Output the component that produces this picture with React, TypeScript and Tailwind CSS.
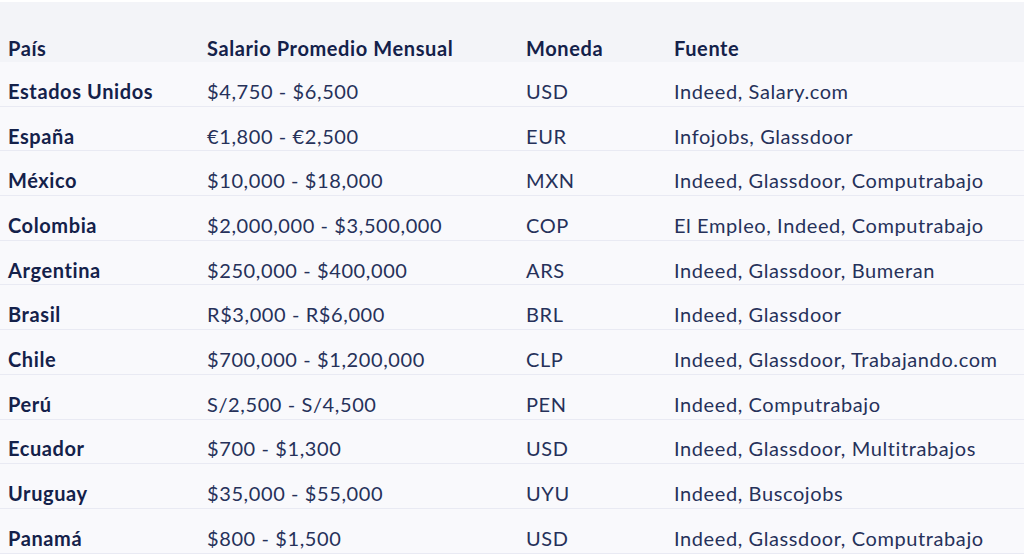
const rows = [
  ["Estados Unidos", "$4,750 - $6,500", "USD", "Indeed, Salary.com"],
  ["España", "€1,800 - €2,500", "EUR", "Infojobs, Glassdoor"],
  ["México", "$10,000 - $18,000", "MXN", "Indeed, Glassdoor, Computrabajo"],
  ["Colombia", "$2,000,000 - $3,500,000", "COP", "El Empleo, Indeed, Computrabajo"],
  ["Argentina", "$250,000 - $400,000", "ARS", "Indeed, Glassdoor, Bumeran"],
  ["Brasil", "R$3,000 - R$6,000", "BRL", "Indeed, Glassdoor"],
  ["Chile", "$700,000 - $1,200,000", "CLP", "Indeed, Glassdoor, Trabajando.com"],
  ["Perú", "S/2,500 - S/4,500", "PEN", "Indeed, Computrabajo"],
  ["Ecuador", "$700 - $1,300", "USD", "Indeed, Glassdoor, Multitrabajos"],
  ["Uruguay", "$35,000 - $55,000", "UYU", "Indeed, Buscojobs"],
  ["Panamá", "$800 - $1,500", "USD", "Indeed, Glassdoor, Computrabajo"],
];

export default function App() {
  return (
    <div className="w-[1024px] h-[556px] overflow-hidden bg-white pt-[2px] font-['Lato',sans-serif] text-[20px] leading-[28px] tracking-[0.6px]">
      <div className="grid grid-cols-[199px_319px_148px_1fr] h-[60px] items-center pt-[32px] bg-[#f3f4f8] font-bold text-[#14214a]">
        <div className="pl-2">País</div>
        <div className="pl-2">Salario Promedio Mensual</div>
        <div className="pl-2">Moneda</div>
        <div className="pl-2">Fuente</div>
      </div>
      {rows.map((r) => (
        <div
          key={r[0]}
          className="grid grid-cols-[199px_319px_148px_1fr] h-[44.7px] items-center pt-[14px] bg-[#f9f9fc] border-b border-[#e9eaf3] text-[#26315a]"
        >
          <div className="pl-2 font-bold text-[#14214a]">{r[0]}</div>
          <div className="pl-2">{r[1]}</div>
          <div className="pl-2">{r[2]}</div>
          <div className="pl-2">{r[3]}</div>
        </div>
      ))}
    </div>
  );
}
